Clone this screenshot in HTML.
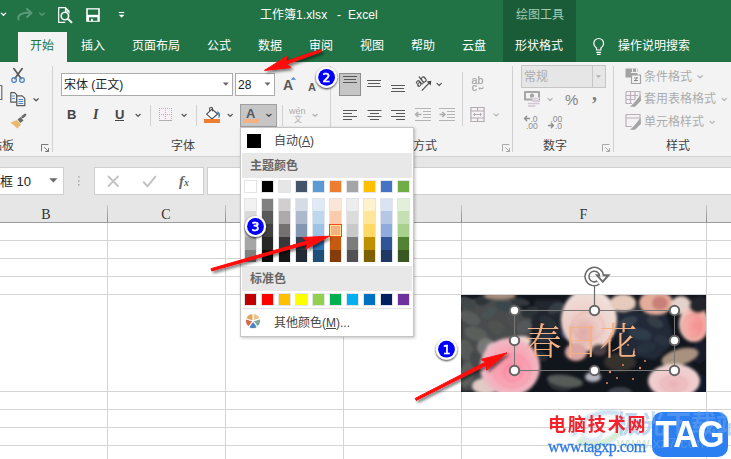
<!DOCTYPE html>
<html lang="zh-CN">
<head>
<meta charset="utf-8">
<title>工作簿1.xlsx - Excel</title>
<style>
*{box-sizing:border-box;margin:0;padding:0}
html,body{width:731px;height:459px;overflow:hidden;background:#fff}
body{position:relative;font-family:"Liberation Sans","Noto Sans CJK SC",sans-serif;font-size:12px;color:#444;line-height:1}
.a{position:absolute}
.t{position:absolute;white-space:nowrap;line-height:16px;height:16px}
#hdr{left:0;top:0;width:731px;height:62px;background:#217346}
#ctx{left:503px;top:0;width:73px;height:62px;background:#1a5c38}
#tabon{left:18px;top:32px;width:49px;height:30px;background:#f3f3f3}
.tab{color:#fff;top:38px}
#rib{left:0;top:62px;width:731px;height:94px;background:#f3f3f3}
#ribline{left:0;top:156px;width:731px;height:1px;background:#d2d2d2}
#band{left:0;top:157px;width:731px;height:66px;background:#e6e6e6}
.vsep{position:absolute;width:1px;background:#d0d0d0}
.gl{top:138px;color:#444}
.box{position:absolute;background:#fff;border:1px solid #ababab}
.dis{color:#acacac}
#grid{left:0;top:223px;width:731px;height:236px;background:#fff}
.hl{position:absolute;left:0;width:731px;height:1px;background:#d4d4d4}
.vl{position:absolute;top:223px;width:1px;height:236px;background:#d4d4d4}
.ch{position:absolute;top:206px;height:17px;line-height:17px;text-align:center;font-family:"Liberation Serif","Noto Serif CJK SC",serif;font-size:14px;color:#333}
.cs{position:absolute;top:205px;width:1px;height:17px;background:linear-gradient(#c4c4c4,#8c8c8c)}
#dd{left:240px;top:127px;width:174px;height:210px;background:#fff;border:1px solid #c6c6c6;box-shadow:1px 1px 3px rgba(0,0,0,.25)}
.ddh{position:absolute;left:0;width:170px;height:25px;background:#e8e8e8;font-weight:bold;color:#666;line-height:26px;padding-left:8px;white-space:nowrap}
.sw{position:absolute;width:13px;height:13px;border:1px solid #e2e4e7}
.col{position:absolute;width:13px;height:64px;top:69px;border:1px solid #e2e4e7;border-bottom:0}
.col i{display:block}
</style>
</head>
<body>
<!-- ===== title bar + tabs ===== -->
<div class="a" id="hdr"></div>
<div class="a" id="ctx"></div>
<div class="a" id="tabon"></div>
<div class="t" style="left:260px;top:7px;color:#fff">工作簿<span style="letter-spacing:.100px">1.xlsx</span></div>
<div class="t" style="left:337px;top:7px;color:#fff">-</div>
<div class="t" style="left:348px;top:7px;color:#fff;letter-spacing:.100px">Excel</div>
<div class="t" style="left:516px;top:7px;color:#a3cbb3">绘图工具</div>
<div class="t tab" style="left:30px;color:#217346">开始</div>
<div class="t tab" style="left:81px">插入</div>
<div class="t tab" style="left:132px">页面布局</div>
<div class="t tab" style="left:207px">公式</div>
<div class="t tab" style="left:258px">数据</div>
<div class="t tab" style="left:309px">审阅</div>
<div class="t tab" style="left:360px">视图</div>
<div class="t tab" style="left:411px">帮助</div>
<div class="t tab" style="left:462px">云盘</div>
<div class="t tab" style="left:515px">形状格式</div>
<div class="t tab" style="left:618px">操作说明搜索</div>

<!-- ===== ribbon ===== -->
<div class="a" id="rib"></div>
<div class="a" id="ribline"></div>
<div class="a" id="band"></div>

<!-- group separators -->
<div class="vsep" style="left:52px;top:66px;height:86px"></div>
<div class="vsep" style="left:330px;top:66px;height:86px"></div>
<div class="vsep" style="left:512px;top:66px;height:86px"></div>
<div class="vsep" style="left:613px;top:66px;height:86px"></div>
<div class="vsep" style="left:150px;top:105px;height:21px"></div>
<div class="vsep" style="left:196px;top:105px;height:21px"></div>
<div class="vsep" style="left:282px;top:105px;height:21px"></div>
<div class="vsep" style="left:462px;top:72px;height:54px"></div>

<!-- group labels -->
<div class="t gl" style="left:-22px">剪贴板</div>
<div class="t gl" style="left:171px">字体</div>
<div class="t gl" style="left:389px">对齐方式</div>
<div class="t gl" style="left:543px">数字</div>
<div class="t gl" style="left:666px">样式</div>

<!-- font boxes -->
<div class="box" style="left:61px;top:73px;width:172px;height:23px"></div>
<div class="t" style="left:64px;top:77px;color:#222">宋体 (正文)</div>
<div class="box" style="left:235px;top:73px;width:40px;height:23px"></div>
<div class="t" style="left:238px;top:77px;color:#222">28</div>

<!-- B I U -->
<div class="t" style="left:67px;top:107px;font-weight:bold;font-size:13px;color:#444">B</div>
<div class="t" style="left:93px;top:107px;font-style:italic;font-weight:bold;font-size:14px;color:#444;font-family:'Liberation Serif',serif">I</div>
<div class="t" style="left:115px;top:107px;font-size:13px;font-weight:bold;color:#444">U</div>
<div class="a" style="left:115px;top:120px;width:9px;height:1px;background:#444"></div>

<!-- font colour button (pressed) -->
<div class="a" style="left:240px;top:104px;width:37px;height:23px;background:#c6c6c6;border:1px solid #a0a0a0"></div>
<div class="t" style="left:246px;top:106px;font-size:13px;font-weight:bold;color:#595959">A</div>
<div class="t" style="left:283px;top:77px;font-size:14px;font-weight:bold;color:#595959">A</div>
<div class="t" style="left:308px;top:79px;font-size:11px;font-weight:bold;color:#595959">A</div>
<div class="t dis" style="left:289px;top:103px;font-size:9px">wén</div>
<div class="t dis" style="left:294px;top:112px;font-size:8px">文</div>
<div class="a" style="left:243px;top:119px;width:16px;height:4px;background:#f4b183"></div>

<!-- number format -->
<div class="box" style="left:521px;top:65px;width:85px;height:23px;background:#e6e6e6;border-color:#c6c6c6"></div>
<div class="vsep" style="left:592px;top:66px;height:21px;background:#c6c6c6"></div>
<div class="t dis" style="left:524px;top:69px">常规</div>
<div class="t" style="left:565px;top:91.500px;font-size:15px;color:#828282">%</div>
<div class="t" style="left:592px;top:84.500px;font-size:20px;font-weight:bold;color:#808080;font-family:'Liberation Serif',serif">,</div>
<div class="t" style="left:530.500px;top:110.500px;font-size:8.500px;color:#8c8c8c">.0</div>
<div class="t" style="left:526px;top:117.500px;font-size:8.500px;color:#8c8c8c">.00</div>
<div class="t" style="left:550.500px;top:110.500px;font-size:8.500px;color:#8c8c8c">.00</div>
<div class="t" style="left:555px;top:117.500px;font-size:8.500px;color:#8c8c8c">.0</div>

<!-- styles -->
<div class="t dis" style="left:644px;top:69px">条件格式</div>
<div class="t dis" style="left:644px;top:91px">套用表格格式</div>
<div class="t dis" style="left:644px;top:114px">单元格样式</div>

<!-- ===== formula bar ===== -->
<div class="a" style="left:-1px;top:167px;width:65px;height:28px;background:#fff;border:1px solid #cfcfcf"></div>
<div class="t" style="left:0;top:174px;font-size:13px;color:#222">框 10</div>
<div class="a" style="left:94px;top:167px;width:110px;height:28px;background:#fff;border:1px solid #cfcfcf"></div>
<div class="a" style="left:207px;top:167px;width:526px;height:28px;background:#fff;border:1px solid #cfcfcf"></div>
<div class="t" style="left:179px;top:173px;font-family:'Liberation Serif',serif;font-style:italic;font-weight:bold;font-size:15px;color:#666">f<span style="font-size:10px">x</span></div>

<!-- ===== column headers + grid ===== -->
<div class="a" id="grid"></div>
<div class="a" style="left:0;top:222px;width:731px;height:1px;background:#9b9b9b"></div>
<div class="ch" style="left:0;width:92px">B</div>
<div class="ch" style="left:107px;width:118px">C</div>
<div class="ch" style="left:461px;width:245px">F</div>
<div class="cs" style="left:107px"></div>
<div class="cs" style="left:225px"></div>
<div class="cs" style="left:461px"></div>
<div class="cs" style="left:706px"></div>
<div class="hl" style="top:240px"></div>
<div class="hl" style="top:258px"></div>
<div class="hl" style="top:276px"></div>
<div class="hl" style="top:294px"></div>
<div class="hl" style="top:391px"></div>
<div class="hl" style="top:409px"></div>
<div class="hl" style="top:427px"></div>
<div class="hl" style="top:445px"></div>
<div class="vl" style="left:107px"></div>
<div class="vl" style="left:225px"></div>
<div class="vl" style="left:343px"></div>
<div class="vl" style="left:461px"></div>
<div class="vl" style="left:706px"></div>

<!-- ===== picture ===== -->
<svg class="a" id="pic" style="left:461px;top:295px" width="245" height="97" viewBox="461 295 245 97">
<defs>
  <filter id="b0" x="-30%" y="-30%" width="160%" height="160%"><feGaussianBlur stdDeviation=".8"/></filter>
  <filter id="b1" x="-30%" y="-30%" width="160%" height="160%"><feGaussianBlur stdDeviation="1.400"/></filter>
  <radialGradient id="rp" cx=".52" cy=".5" r=".55"><stop offset="0" stop-color="#fb8ea3"/><stop offset=".5" stop-color="#f9a3b3"/><stop offset=".85" stop-color="#f0b9c4"/><stop offset="1" stop-color="#dcc3cb"/></radialGradient>
  <radialGradient id="rq" cx=".4" cy=".7" r=".7"><stop offset="0" stop-color="#dfa7a4"/><stop offset=".4" stop-color="#ecccc6"/><stop offset="1" stop-color="#f2e2dc"/></radialGradient>
  <radialGradient id="rr" cx=".6" cy=".55" r=".55"><stop offset="0" stop-color="#f58f8f"/><stop offset=".6" stop-color="#f4a8a2"/><stop offset="1" stop-color="#efc8bf"/></radialGradient>
  <radialGradient id="rs" cx=".5" cy=".6" r=".6"><stop offset="0" stop-color="#e9b0b4"/><stop offset=".6" stop-color="#f2cccd"/><stop offset="1" stop-color="#ecd3d0"/></radialGradient>
</defs>
<rect x="461" y="295" width="245" height="97" fill="#11151c"/>
<!-- foliage -->
<g filter="url(#b1)">
  <path d="M461 299h50l22 20-4 30-30 12-20 30h-18z" fill="#484c4d"/>
  <path d="M535 300h25l8 30-20 10-18-14z" fill="#23282f"/>
  <path d="M615 312h50l10 30-20 18-35-6z" fill="#232b37"/>
</g>
<g filter="url(#b0)">
  <ellipse cx="467" cy="303" rx="9" ry="5" fill="#3f4648" transform="rotate(30 467 303)"/>
  <ellipse cx="483" cy="300" rx="8" ry="5" fill="#2f3638" transform="rotate(-20 483 300)"/>
  <ellipse cx="470" cy="318" rx="11" ry="6" fill="#585d5c" transform="rotate(25 470 318)"/>
  <ellipse cx="489" cy="313" rx="8" ry="5" fill="#4a5254" transform="rotate(-35 489 313)"/>
  <ellipse cx="504" cy="306" rx="9" ry="5" fill="#39464c" transform="rotate(20 504 306)"/>
  <ellipse cx="476" cy="334" rx="12" ry="7" fill="#5a5e5c" transform="rotate(20 476 334)"/>
  <ellipse cx="497" cy="328" rx="10" ry="6" fill="#50534f" transform="rotate(35 497 328)"/>
  <ellipse cx="466" cy="350" rx="7" ry="11" fill="#565a58" transform="rotate(-15 466 350)"/>
  <ellipse cx="513" cy="320" rx="9" ry="5" fill="#4d504f" transform="rotate(50 513 320)"/>
  <ellipse cx="524" cy="327" rx="8" ry="6" fill="#55585a" transform="rotate(-30 524 327)"/>
  <ellipse cx="509" cy="336" rx="9" ry="6" fill="#4a4d4c" transform="rotate(10 509 336)"/>
  <ellipse cx="486" cy="347" rx="9" ry="9" fill="#777876" transform="rotate(0 486 347)"/>
  <ellipse cx="467" cy="374" rx="7" ry="13" fill="#5b5f5d" transform="rotate(12 467 374)"/>
  <ellipse cx="476" cy="360" rx="6" ry="9" fill="#454a49" transform="rotate(-20 476 360)"/>
  <ellipse cx="530" cy="312" rx="9" ry="5" fill="#2c3238" transform="rotate(-20 530 312)"/>
  <ellipse cx="520" cy="302" rx="10" ry="4" fill="#30383d" transform="rotate(10 520 302)"/>
  <ellipse cx="548" cy="322" rx="9" ry="5" fill="#2a3038" transform="rotate(30 548 322)"/>
  <ellipse cx="556" cy="308" rx="9" ry="5" fill="#363c44" transform="rotate(-25 556 308)"/>
  <ellipse cx="544" cy="338" rx="8" ry="5" fill="#283040" transform="rotate(-10 544 338)"/>
  <ellipse cx="567" cy="334" rx="6" ry="5" fill="#38406a" transform="rotate(0 567 334)"/>
  <ellipse cx="628" cy="322" rx="10" ry="5" fill="#37404c" transform="rotate(-20 628 322)"/>
  <ellipse cx="640" cy="334" rx="12" ry="6" fill="#2f3a48" transform="rotate(15 640 334)"/>
  <ellipse cx="655" cy="322" rx="9" ry="5" fill="#343c46" transform="rotate(30 655 322)"/>
  <ellipse cx="646" cy="348" rx="10" ry="6" fill="#27303c" transform="rotate(-15 646 348)"/>
  <ellipse cx="632" cy="308" rx="8" ry="4" fill="#2d3540" transform="rotate(10 632 308)"/>
  <ellipse cx="662" cy="340" rx="8" ry="5" fill="#2b3340" transform="rotate(20 662 340)"/>
  <ellipse cx="620" cy="392" rx="12" ry="5" fill="#3b3f48" transform="rotate(0 620 392)"/>
  <ellipse cx="560" cy="385" rx="12" ry="6" fill="#2a2e36" transform="rotate(10 560 385)"/>
  <ellipse cx="700" cy="352" rx="8" ry="12" fill="#171c2c" transform="rotate(10 700 352)"/>
  <ellipse cx="702" cy="384" rx="6" ry="10" fill="#10142a" transform="rotate(0 702 384)"/>
  <ellipse cx="540" cy="356" rx="8" ry="5" fill="#252a33" transform="rotate(20 540 356)"/>
</g>
<!-- roses -->
<g filter="url(#b1)">
  <ellipse cx="500" cy="296" rx="16" ry="4" fill="#a58c7c"/>
  <ellipse cx="589" cy="320" rx="28" ry="31" fill="url(#rq)"/>
  <ellipse cx="576" cy="352" rx="11" ry="9" fill="#dba6a3"/>
  <ellipse cx="599" cy="350" rx="8" ry="6" fill="#4b3f45"/>
  <ellipse cx="593" cy="377" rx="8" ry="5" fill="#b4b5bf"/>
  <ellipse cx="565" cy="381" rx="18" ry="6" fill="#565b58" transform="rotate(8 565 381)"/>
  <ellipse cx="620" cy="362" rx="16" ry="9" fill="#34332f"/>
  <ellipse cx="623" cy="303" rx="13" ry="9" fill="#e6cbbc"/>
  <ellipse cx="656" cy="303" rx="17" ry="12" fill="#e2ad9a"/>
  <ellipse cx="660" cy="303" rx="8" ry="7" fill="#c97f78"/>
  <ellipse cx="681" cy="305" rx="10" ry="9" fill="#e6d2cc"/>
  <ellipse cx="694" cy="324" rx="15" ry="18" fill="url(#rr)"/>
  <ellipse cx="699" cy="305" rx="10" ry="8" fill="#23262a" transform="rotate(-15 699 305)"/>
  <ellipse cx="680" cy="357" rx="19" ry="8" fill="#a8927f" transform="rotate(-15 680 357)"/>
  <ellipse cx="674" cy="381" rx="26" ry="17" fill="url(#rs)"/>
  <ellipse cx="486" cy="386" rx="14" ry="8" fill="#e2cbc4"/>
  <ellipse cx="497" cy="349" rx="11" ry="7" fill="#e3c2cd"/>
  <ellipse cx="522" cy="341" rx="9" ry="5" fill="#ead8d0"/>
  <ellipse cx="510" cy="367" rx="30" ry="29" fill="url(#rp)"/>
</g>
<g fill="none" stroke-width="1" filter="url(#b0)">
  <ellipse cx="512" cy="371" rx="18" ry="16" stroke="#f77f98" opacity=".6"/>
  <ellipse cx="513" cy="373" rx="9" ry="8" stroke="#f4708c" opacity=".6"/>
  <ellipse cx="588" cy="326" rx="16" ry="14" stroke="#d8988f" opacity=".6"/>
  <ellipse cx="692" cy="326" rx="9" ry="11" stroke="#ea7f7c" opacity=".6"/>
  <ellipse cx="674" cy="384" rx="13" ry="8" stroke="#e0a6a8" opacity=".6"/>
</g>
<!-- little orange sparks -->
<g fill="#e8875a">
  <circle cx="628" cy="345" r="1"/><circle cx="634" cy="352" r="1"/><circle cx="610" cy="372" r="1.200"/><circle cx="617" cy="378" r="1"/><circle cx="640" cy="368" r="1.200"/><circle cx="633" cy="379" r="1"/><circle cx="645" cy="361" r="1"/><circle cx="623" cy="365" r="1"/><circle cx="607" cy="383" r="1"/>
</g>
</svg>
<!-- text box on the picture -->
<div class="a" style="left:514px;top:310px;width:161px;height:61px;border:1px solid #767676"></div>
<div class="a" id="wa" style="left:523.500px;top:317px;font-family:'Liberation Serif','Noto Serif CJK SC',serif;font-size:37px;line-height:52px;font-weight:300;color:#f4b183;white-space:nowrap;letter-spacing:0;transform-origin:0 50%;transform:scaleX(1.020)">春日花</div>
<svg class="a" id="hnd" style="left:500px;top:262px" width="190" height="120" viewBox="500 262 190 120" fill="#fff" stroke="#646464" stroke-width="2">
  <path d="M594.500 286v20" stroke="#6b6b6b" stroke-width="1.200" fill="none"/>
  <circle cx="514.500" cy="310.500" r="4.700"/><circle cx="594.500" cy="310.500" r="4.700"/><circle cx="674.500" cy="310.500" r="4.700"/>
  <circle cx="514.500" cy="340.500" r="4.700"/><circle cx="674.500" cy="340.500" r="4.700"/>
  <circle cx="514.500" cy="370.500" r="4.700"/><circle cx="594.500" cy="370.500" r="4.700"/><circle cx="674.500" cy="370.500" r="4.700"/>
  <path d="M601.600 276.500a7.300 7.300 0 1 0-3.300 6.100" fill="none" stroke="#6b6b6b" stroke-width="5.400" stroke-linecap="butt"/>
  <path d="M596.500 275h12.500l-6.200 7z" fill="#6b6b6b" stroke="#6b6b6b" stroke-width="1.500" stroke-linejoin="miter"/>
  <path d="M601.600 276.500a7.300 7.300 0 1 0-3.600 6.300" fill="none" stroke="#fff" stroke-width="2.400" stroke-linecap="butt"/>
  <path d="M599.300 276.400h6.800l-3.400 3.800z" fill="#fff" stroke="none"/>
</svg>

<!-- ===== colour dropdown ===== -->
<div class="a" id="dd">
<div class="a" style="left:1px;top:1px">
  <div class="a" style="left:5px;top:5px;width:14px;height:14px;background:#000"></div>
  <div class="t" style="left:32px;top:4px;color:#444">自动(<u>A</u>)</div>
  <div class="ddh" style="top:24px">主题颜色</div>
  <div class="ddh" style="top:137px">标准色</div>
  <!-- theme colours -->
  <div class="sw" style="left:2px;top:51px;background:#FFFFFF"></div>
  <div class="sw" style="left:19px;top:51px;background:#000000"></div>
  <div class="sw" style="left:36px;top:51px;background:#E7E6E6"></div>
  <div class="sw" style="left:53px;top:51px;background:#44546A"></div>
  <div class="sw" style="left:70px;top:51px;background:#5B9BD5"></div>
  <div class="sw" style="left:87px;top:51px;background:#ED7D31"></div>
  <div class="sw" style="left:104px;top:51px;background:#A5A5A5"></div>
  <div class="sw" style="left:121px;top:51px;background:#FFC000"></div>
  <div class="sw" style="left:138px;top:51px;background:#4472C4"></div>
  <div class="sw" style="left:155px;top:51px;background:#70AD47"></div>
  <!-- tints and shades -->
  <div class="col" style="left:2px"><i style="height:12px;background:#F2F2F2"></i><i style="height:13px;background:#D9D9D9"></i><i style="height:13px;background:#BFBFBF"></i><i style="height:13px;background:#A6A6A6"></i><i style="height:12px;background:#808080"></i></div>
  <div class="col" style="left:19px"><i style="height:12px;background:#808080"></i><i style="height:13px;background:#595959"></i><i style="height:13px;background:#404040"></i><i style="height:13px;background:#262626"></i><i style="height:12px;background:#0D0D0D"></i></div>
  <div class="col" style="left:36px"><i style="height:12px;background:#D0CECE"></i><i style="height:13px;background:#AEAAAA"></i><i style="height:13px;background:#757171"></i><i style="height:13px;background:#3A3838"></i><i style="height:12px;background:#161616"></i></div>
  <div class="col" style="left:53px"><i style="height:12px;background:#D6DCE5"></i><i style="height:13px;background:#ADB9CA"></i><i style="height:13px;background:#8497B0"></i><i style="height:13px;background:#333F50"></i><i style="height:12px;background:#222A35"></i></div>
  <div class="col" style="left:70px"><i style="height:12px;background:#DEEBF7"></i><i style="height:13px;background:#BDD7EE"></i><i style="height:13px;background:#9DC3E6"></i><i style="height:13px;background:#2E75B6"></i><i style="height:12px;background:#1F4E79"></i></div>
  <div class="col" style="left:87px"><i style="height:12px;background:#FBE5D6"></i><i style="height:13px;background:#F8CBAD"></i><i style="height:13px;background:#F4B183"></i><i style="height:13px;background:#C55A11"></i><i style="height:12px;background:#843C0B"></i></div>
  <div class="col" style="left:104px"><i style="height:12px;background:#EDEDED"></i><i style="height:13px;background:#DBDBDB"></i><i style="height:13px;background:#C9C9C9"></i><i style="height:13px;background:#7C7C7C"></i><i style="height:12px;background:#525252"></i></div>
  <div class="col" style="left:121px"><i style="height:12px;background:#FFF2CC"></i><i style="height:13px;background:#FFE699"></i><i style="height:13px;background:#FFD966"></i><i style="height:13px;background:#BF9000"></i><i style="height:12px;background:#7F6000"></i></div>
  <div class="col" style="left:138px"><i style="height:12px;background:#DAE3F3"></i><i style="height:13px;background:#B4C7E7"></i><i style="height:13px;background:#8FAADC"></i><i style="height:13px;background:#2F5597"></i><i style="height:12px;background:#203864"></i></div>
  <div class="col" style="left:155px"><i style="height:12px;background:#E2F0D9"></i><i style="height:13px;background:#C5E0B4"></i><i style="height:13px;background:#A9D18E"></i><i style="height:13px;background:#548235"></i><i style="height:12px;background:#385723"></i></div>
  <!-- standard colours -->
  <div class="sw" style="left:2px;top:164px;background:#C00000"></div>
  <div class="sw" style="left:19px;top:164px;background:#FF0000"></div>
  <div class="sw" style="left:36px;top:164px;background:#FFC000"></div>
  <div class="sw" style="left:53px;top:164px;background:#FFFF00"></div>
  <div class="sw" style="left:70px;top:164px;background:#92D050"></div>
  <div class="sw" style="left:87px;top:164px;background:#00B050"></div>
  <div class="sw" style="left:104px;top:164px;background:#00B0F0"></div>
  <div class="sw" style="left:121px;top:164px;background:#0070C0"></div>
  <div class="sw" style="left:138px;top:164px;background:#002060"></div>
  <div class="sw" style="left:155px;top:164px;background:#7030A0"></div>
  <div class="a" style="left:0;top:179px;width:170px;height:1px;background:#e2e4e7"></div>
  <div class="t" style="left:32px;top:186px;color:#444">其他颜色(<u>M</u>)...</div>
  <svg class="a" style="left:2px;top:183px" width="18" height="18" viewBox="0 0 18 18" stroke="#fff" stroke-width="1.100" stroke-linejoin="round">
    <path d="M9 9L9.00 1.40A7.6 7.6 0 0 1 16.23 6.65z" fill="#e9c58c"/>
    <path d="M9 9L16.23 6.65A7.6 7.6 0 0 1 13.47 15.15z" fill="#7ea89a"/>
    <path d="M9 9L13.47 15.15A7.6 7.6 0 0 1 4.53 15.15z" fill="#4f81bd"/>
    <path d="M9 9L4.53 15.15A7.6 7.6 0 0 1 1.77 6.65z" fill="#d8694b"/>
    <path d="M9 9L1.77 6.65A7.6 7.6 0 0 1 9.00 1.40z" fill="#e8a25e"/>
  </svg>
  <div class="a" style="left:87px;top:95px;width:13px;height:13px;border:1px solid #f04e16;background:#f4b183;box-shadow:inset 0 0 0 1px #ffe08a"></div>
</div>
</div>

<!-- ===== icon overlay ===== -->
<svg class="a" id="ico" style="left:0;top:0;will-change:transform" width="731" height="459" viewBox="0 0 731 459" fill="none">
<!-- quick access toolbar -->
<g id="qat" stroke="#fff" stroke-width="1.3" stroke-linecap="round" stroke-linejoin="round">
  <path d="M1.300 13.100l2.150 2.100 2.150-2.100"/>
  <path d="M18.5 19.5c-1.5-5 5-7.500 12.500-6.500M27 9l4.500 4-4.500 4" stroke="#5a9a78" stroke-width="2"/>
  <path d="M39.700 13l2.300 2.400L44.300 13" stroke="#5a9a78"/>
  <path d="M65.500 7.600h-6.800v14.800h6M65.500 7.600l3.500 3.500v2M65.500 7.600v3.500h3.500" stroke-width="1.200"/>
  <circle cx="64.900" cy="16" r="3.700" stroke-width="1.600" fill="#217346"/>
  <path d="M68 19l3.400 3.300" stroke-width="2.200" stroke="#e6efe9"/>
  <rect x="86.200" y="8.200" width="13.600" height="13.600" fill="#fff" stroke="none"/>
  <rect x="87.800" y="9.500" width="10.400" height="5.300" fill="#217346" stroke="none"/>
  <rect x="89" y="17.300" width="8.400" height="3.500" fill="#217346" stroke="none"/>
  <rect x="91" y="18.800" width="1.800" height="2.200" fill="#fff" stroke="none"/>
  <path d="M118.800 12.500h5.400" stroke-width="1.100" stroke-linecap="butt"/>
  <path d="M118.800 14.700h5.600l-2.800 3.100z" fill="#fff" stroke="none"/>
</g>
<!-- clipboard group -->
<g id="clip" stroke-linecap="round" stroke-linejoin="round">
  <path d="M13.800 68.600l7.300 10M22.200 68.600l-7.300 10" stroke="#595959" stroke-width="1.700"/>
  <circle cx="14.100" cy="80" r="2.300" stroke="#4a86c8" stroke-width="1.300"/>
  <circle cx="22" cy="80" r="2.300" stroke="#4a86c8" stroke-width="1.300"/>
  <path d="M0 85.500h1.800v14H0" stroke="#6a6a6a" stroke-width="1.200"/>
  <path d="M10.800 92.700h3.800l2 2v7.500h-5.800z" stroke="#595959" stroke-width="1.200" fill="#f3f3f3"/>
  <path d="M16.800 95.800h5.400l2.600 2.600v7.300h-8z" stroke="#595959" stroke-width="1.200" fill="#f3f3f3"/>
  <path d="M12.500 96h2M12.500 98.500h2M18.800 99.500h4M18.800 101.500h4M18.800 103.500h4" stroke="#4a86c8" stroke-width="1"/>
  <path d="M33.95 98.70l2.15 2.1 2.15-2.1" stroke="#555" stroke-width="1.200"/>
  <path d="M22.500 117l2.500-2" stroke="#6a6a6a" stroke-width="2.600"/>
  <path d="M17.500 119.500l3-2.500 3 3.500-3 2.500z" fill="#6a6a6a" stroke="none"/>
  <path d="M10.500 122.500l6.500-2.500 4 4.500-3.500 4z" fill="#e8b96f" stroke="none"/>
  <path d="M41.500 151v-6.500h6.500M44.500 147.500l4 4M48.500 148.500v3h-3" stroke="#777" stroke-width="1"/>
</g>
<!-- font group -->
<g id="fnt" stroke-linecap="round" stroke-linejoin="round">
  <path d="M222.800 82.600h6l-3 3.200z" fill="#666"/>
  <path d="M264.500 82.600h6l-3 3.200z" fill="#666"/>
  <path d="M290.800 79.700h5.200l-2.600-2.800z" fill="#4a86c8"/>
  <path d="M135.95 114.30l2.15 2.1 2.15-2.1" stroke="#555" stroke-width="1.200"/>
  <path d="M181.95 114.30l2.15 2.1 2.15-2.1" stroke="#555" stroke-width="1.200"/>
  <path d="M228.05 114.30l2.15 2.1 2.15-2.1" stroke="#555" stroke-width="1.200"/>
  <path d="M266.75 114.30l2.15 2.1 2.15-2.1" stroke="#444" stroke-width="1.200"/>
  <path d="M312.85 114.30l2.15 2.1 2.15-2.1" stroke="#b0b0b0" stroke-width="1.200"/>
  <rect x="159" y="108" width="13" height="12" fill="#f8f2f8" stroke="none"/>
  <path d="M159 108.500h13M159 114.500h13M159.500 108v12M165.500 108v12M171.500 108v12" stroke="#bba7b9" stroke-width="1" stroke-dasharray="1 1" stroke-linecap="butt"/>
  <path d="M159 120.500h13" stroke="#b0b0b0" stroke-width="1" stroke-linecap="butt"/>
  <path d="M206.600 114.200l5.400-5 5.600 4.800-5.600 4.800z" stroke="#4a4a4a" stroke-width="1.100" fill="#fff"/>
  <path d="M209.700 110.800v-3.200h2.800v3.400" stroke="#4a4a4a" stroke-width="1"/>
  <path d="M216.600 111.300c2.600.4 3.800 2.200 3.400 4.400-.3 1.400-.9 2.200-1.600 2.600.5-2.600-.1-4.800-1.800-7z" fill="#3c7dc9"/>
  <rect x="204" y="119" width="16" height="4" fill="#ed7d31"/>
</g>
<!-- alignment group -->
<rect x="339.500" y="73.500" width="21" height="22" fill="#c6c6c6" stroke="#8e8e8e"/>
<g id="aln" stroke="#595959" stroke-width="1" stroke-linecap="butt">
  <path d="M343 76.500h14M344 79.500h12M343 82.500h14"/>
  <path d="M367 80.500h14M368 83.500h12M367 86.500h14"/>
  <path d="M391 85.500h14M392 88.500h12M391 91.500h14"/>
  <path d="M343 110.500h14M343 113.500h9M343 116.500h14M343 119.500h9"/>
  <path d="M367.500 110.500h14M370 113.500h9M367.500 116.500h14M370 119.500h9"/>
  <path d="M391 110.500h14M396 113.500h9M391 116.500h14M396 119.500h9"/>
  <path d="M415 108.500h16M423 111.500h8M423 114.500h8M423 117.500h8M415 120.500h16M439 108.500h16M447 111.500h8M447 114.500h8M447 117.500h8M439 120.500h16" stroke="#b4b4b4"/>
  <path d="M421.500 114.500h-5M418.300 112l-2.800 2.500 2.800 2.500M439.500 114.500h5M442.200 112l2.800 2.500-2.800 2.500" stroke="#ababab" stroke-width="1.500" fill="none"/>
  <path d="M421.800 90.600l8.200-8.400" stroke="#4a4a4a" stroke-width="1.200" fill="none"/>
  <path d="M431.300 80.800l-.6 4.600-4-4z" fill="#4a4a4a" stroke="none"/>
  <path d="M437.05 83.40l2.15 2.1 2.15-2.1" stroke="#555" stroke-width="1.200" fill="none" stroke-linecap="round"/>
  <path d="M493.95 113.90l2.15 2.1 2.15-2.1" stroke="#b4b4b4" stroke-width="1.200" fill="none" stroke-linecap="round"/>
  <path d="M470.900 107.500h13.200v14h-13.200zM470.900 111h13.200M470.900 118h13.200M477.500 107.500v3.500M477.500 118v3.500" stroke="#b5a9b4" stroke-width="1.200" fill="none"/>
  <path d="M473.500 114.500h8M475 113l-1.500 1.500 1.500 1.500M480 113l1.500 1.500-1.500 1.500" stroke="#b5a9b4" stroke-width="1" fill="none"/>
  <path d="M483 86.500v2h-4M480.300 87.100l-1.400 1.400 1.400 1.400" stroke="#ababab" stroke-width="1" fill="none"/>
</g>
<text x="0" y="0" transform="translate(418.300 87.600) rotate(-38)" font-family="'Liberation Sans',sans-serif" font-size="11" fill="#444" stroke="#444" stroke-width=".250">ab</text>
<text x="471.500" y="83.800" font-family="'Liberation Sans',sans-serif" font-size="10.800" fill="#a6a6a6" stroke="#a6a6a6" stroke-width=".250">ab</text>
<text x="471.800" y="90.700" font-family="'Liberation Sans',sans-serif" font-size="10.800" fill="#a6a6a6" stroke="#a6a6a6" stroke-width=".250">c</text>
<!-- number group -->
<g id="num" stroke-linecap="round" stroke-linejoin="round" fill="none">
  <path d="M596 75.300h5l-2.500 2.800z" fill="#b0b0b0"/>
  <rect x="525" y="92" width="14" height="7.500" stroke="#a6a6a6" stroke-width="2" fill="#f3f3f3"/>
  <circle cx="532" cy="95.700" r="2.200" fill="#a6a6a6"/>
  <ellipse cx="535.500" cy="98.500" rx="3.500" ry="1.500" fill="#ddd5dd" stroke="#f3f3f3" stroke-width=".6"/>
  <path d="M533 101h6.500M528.500 103.500h7M533 103.500h6M528.500 106h6.500" stroke="#d2c8d2" stroke-width="1.400"/>
  <path d="M547.95 98.40l2.15 2.1 2.15-2.1" stroke="#b4b4b4" stroke-width="1.200"/>
  <path d="M524.500 118.500h5M526.700 116.300l-2.200 2.200 2.200 2.200" stroke="#8c8c8c" stroke-width="1.300"/>
  <path d="M548.500 125.500h5M551.300 123.300l2.200 2.200-2.200 2.200" stroke="#8c8c8c" stroke-width="1.300"/>
  <path d="M602.500 151v-6.500h6.500M605.500 147.500l4 4M609.500 148.500v3h-3" stroke="#a8a8a8" stroke-width="1"/>
  <path d="M502.500 151v-6.500h6.500M505.500 147.500l4 4M509.500 148.500v3h-3" stroke="#a8a8a8" stroke-width="1"/>
</g>
<!-- styles group -->
<g id="sty" stroke-linecap="butt" stroke-linejoin="round" fill="none">
  <rect x="625.500" y="68.500" width="12" height="9" fill="#a3a3a3" stroke="none"/>
  <path d="M632.500 68.500v4M636.500 68.500v4M631 72.500h7" stroke="#f3f3f3" stroke-width="1"/>
  <rect x="631.500" y="75" width="9" height="8.500" fill="#f3f3f3" stroke="#a3a3a3" stroke-width="1.200"/>
  <path d="M634 78h4M634 80.500h4M637 77l-2 4.500" stroke="#8a8a8a" stroke-width="1"/>
  <path d="M626 91.500h14v9M626 91.500v12h6M626 95.500h12M626 99.500h9M630.500 91.500v12M635 91.500v8" stroke="#bdaebb" stroke-width="1.200"/>
  <path d="M640.500 95l-7 8.500-3.500 3.300h5l6-6z" fill="#a3a3a3" stroke="none"/>
  <path d="M626 114.500h14v9M626 114.500v12h6M626 118h14" stroke="#bdaebb" stroke-width="1.200"/>
  <path d="M640.500 118l-7 8.500-3.500 3.300h5l6-6z" fill="#a3a3a3" stroke="none"/>
  <path d="M697.95 75.70l2.15 2.1 2.15-2.1M722.05 98.40l2.15 2.1 2.15-2.1M709.95 121.30l2.15 2.1 2.15-2.1" stroke="#b4b4b4" stroke-width="1.200" stroke-linecap="round"/>
</g>
<!-- tell-me lightbulb -->
<g id="bulb" stroke="#fff" stroke-width="1.200" fill="none" stroke-linecap="round" stroke-linejoin="round">
  <path d="M596.500 50v-2c-1.800-1.300-2.700-2.800-2.700-4.600a4.900 4.900 0 0 1 9.800 0c0 1.800-.9 3.300-2.700 4.600v2z"/>
  <path d="M596.800 52.300h3.900M597.300 54.300h2.900"/>
</g>
<!-- formula bar -->
<g id="fx" fill="none" stroke-linecap="round" stroke-linejoin="round">
  <path d="M49.300 178.300h8.200l-4.100 4.300z" fill="#6a6a6a"/>
  <path d="M78.800 176.300v1.500M78.800 180.200v1.500M78.800 184.100v1.500" stroke="#a6a6a6" stroke-width="1.500" stroke-linecap="butt"/>
  <path d="M108.500 176.500l9.500 9.500M118 176.500l-9.500 9.500" stroke="#c3c3c3" stroke-width="1.800"/>
  <path d="M143.800 182.300l3.700 4 7.800-9.600" stroke="#c3c3c3" stroke-width="2.100"/>
</g>
</svg>

<!-- ===== watermark ===== -->
<svg class="a" id="wmbg" style="left:560px;top:400px" width="171" height="59" viewBox="560 400 171 59">
  <defs><filter id="wb" x="-20%" y="-20%" width="140%" height="140%"><feGaussianBlur stdDeviation="1"/></filter></defs>
  <g filter="url(#wb)" fill="none" opacity=".6">
    <path d="M574 436c2-16 26-28 46-22" stroke="#a9cdea" stroke-width="5"/>
    <path d="M578 440c12 10 34 4 44-12" stroke="#b7dfc0" stroke-width="7"/>
    <ellipse cx="592" cy="433" rx="10" ry="7" stroke="#c3d6ea" stroke-width="3"/>
  </g>
  <text x="616" y="433" font-family="'Liberation Sans','Noto Sans CJK SC',sans-serif" font-weight="bold" font-size="25" fill="#b4d0ee" opacity=".85">极光下载站</text>
  <text x="617" y="448" font-family="'Liberation Sans',sans-serif" font-size="15" fill="#bfe3c8" opacity=".85">www.xz7.com</text>
</svg>
<div class="a" style="left:548px;top:413px;font-size:18px;line-height:24px;font-weight:bold;color:#f4222a;white-space:nowrap;letter-spacing:1.900px">电脑技术网</div>
<div class="a" style="left:548px;top:437px;font-family:'Liberation Serif',serif;font-size:16px;line-height:20px;color:#2f7ae0;white-space:nowrap;letter-spacing:-.550px;-webkit-text-stroke:.300px #2f7ae0">www.tagxp.com</div>
<div class="a" style="left:652px;top:412px;width:76px;height:45px;border-radius:10px;background:#2b7ff0"></div>
<svg class="a" style="left:652px;top:412px" width="76" height="45" viewBox="652 412 76 45" opacity=".160">
  <text x="616" y="433" font-family="'Liberation Sans','Noto Sans CJK SC',sans-serif" font-weight="bold" font-size="25" fill="#fff">极光下载站</text>
  <text x="617" y="448" font-family="'Liberation Sans',sans-serif" font-size="15" fill="#dff5e4">www.xz7.com</text>
</svg>
<div class="a" style="left:652px;top:412px;width:76px;height:45px;line-height:45px;text-align:center;font-size:37px;font-weight:bold;color:#fff;letter-spacing:-1px;transform:translateX(-.500px) scaleX(.940)">TAG</div>

<!-- ===== annotations: arrows + numbered badges ===== -->
<svg class="a" id="ann" style="left:0;top:0" width="731" height="459" viewBox="0 0 731 459">
<defs>
  <filter id="sh" x="-20%" y="-20%" width="150%" height="150%"><feGaussianBlur in="SourceAlpha" stdDeviation="1.500"/><feOffset dx="1.500" dy="2.200"/><feComponentTransfer><feFuncA type="linear" slope=".550"/></feComponentTransfer><feMerge><feMergeNode/><feMergeNode in="SourceGraphic"/></feMerge></filter>
  <filter id="sc" x="-30%" y="-30%" width="160%" height="160%"><feGaussianBlur in="SourceAlpha" stdDeviation="1.300"/><feOffset dx=".400" dy=".600"/><feComponentTransfer><feFuncA type="linear" slope=".900"/></feComponentTransfer><feMerge><feMergeNode/><feMergeNode in="SourceGraphic"/></feMerge></filter>
</defs>
<g filter="url(#sh)" fill="#ff0808" stroke="#ff0808" stroke-width="1" stroke-linejoin="round">
  <path d="M416.2 400.4L487.1 364.7L486.5 370.1L506.9 352.9L481.0 359.4L485.7 362.0L415.2 398.4z"/>
  <path d="M320.6 49.6L285.7 61.4L287.1 56.1L264.5 70.4L291.0 67.5L286.7 64.2L321.4 51.6z"/>
  <path d="M211.6 270.9L307.6 243.9L305.9 249.1L329.3 236.2L302.7 237.5L306.8 241.1L211.0 268.7z"/>
</g>
<g filter="url(#sc)" fill="#fff">
  <circle cx="446.500" cy="349.200" r="10.600"/>
  <circle cx="326.600" cy="77.300" r="10.600"/>
  <circle cx="255.500" cy="226.500" r="10.600"/>
</g>
<g fill="#0000fa">
  <circle cx="446.500" cy="349.200" r="8.400"/>
  <circle cx="326.600" cy="77.300" r="8.400"/>
  <circle cx="255.500" cy="226.500" r="8.400"/>
</g>
<g font-family="'DejaVu Sans','Liberation Sans',sans-serif" font-size="12.500" fill="#fff" stroke="#fff" stroke-width=".600" text-anchor="middle">
  <text x="446.700" y="353.800">1</text>
  <text x="326.600" y="81.900">2</text>
  <text x="255.500" y="231.100">3</text>
</g>
</svg>

</body>
</html>
